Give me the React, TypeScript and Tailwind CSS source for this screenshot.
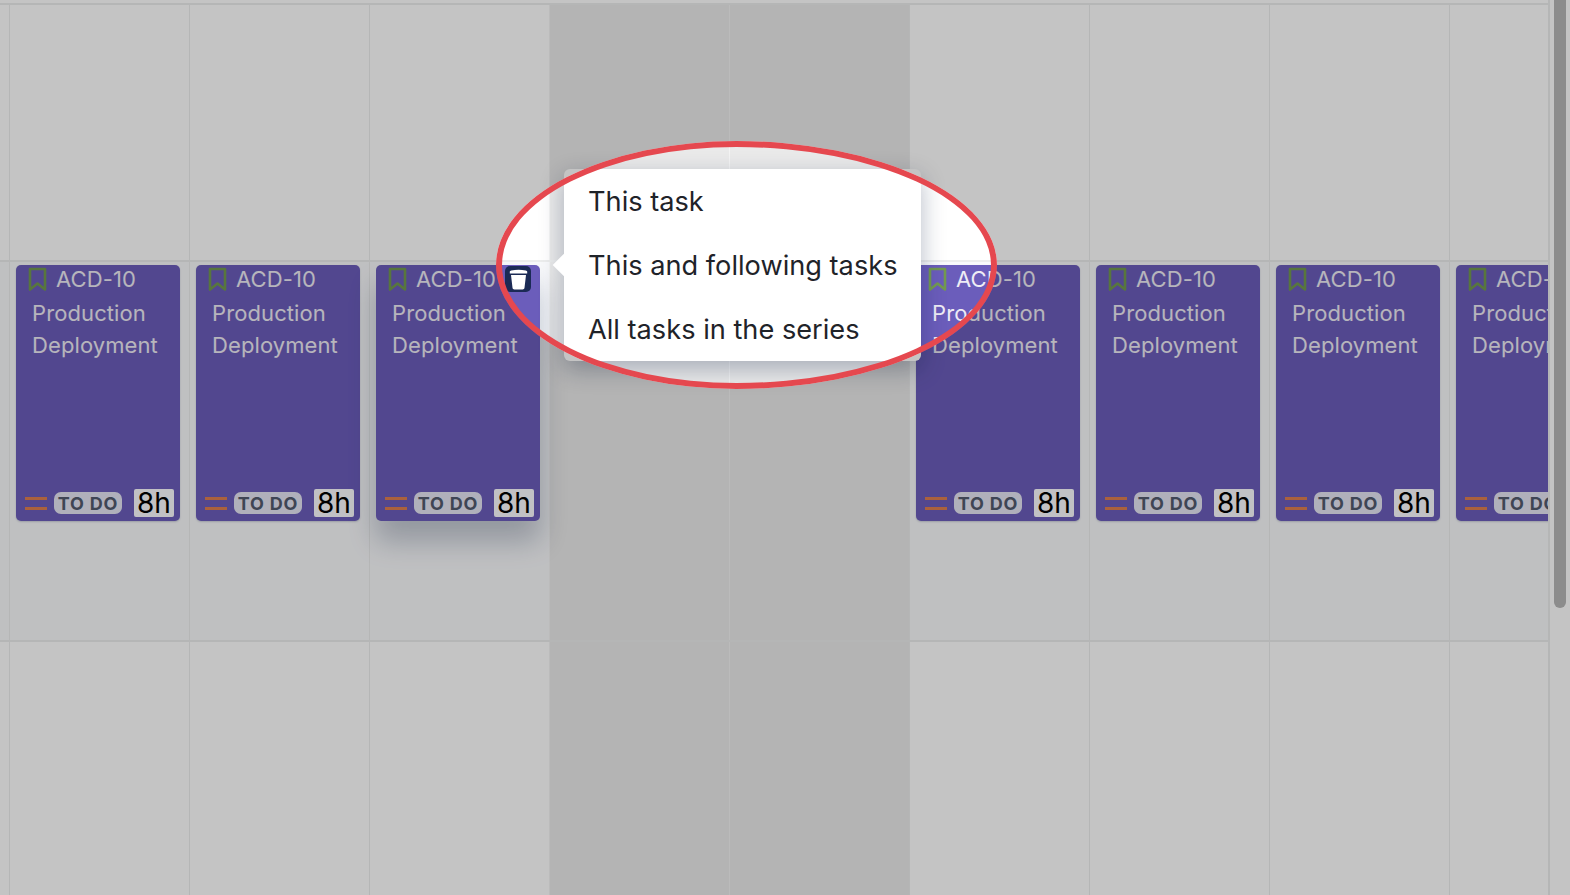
import * as React from 'react';

const days = [false, false, false, true, true, false, false, false, false];
const cardDays = [0, 1, 2, 5, 6, 7, 8];

const BookmarkIcon = () => (
  <svg width="19" height="25" viewBox="0 0 19 25" fill="none" className="shrink-0">
    <path d="M2 2h15v20.5l-7.5-6-7.5 6z" stroke="#739a50" strokeWidth="2.6" strokeLinejoin="round" />
  </svg>
);

const TrashIcon = () => (
  <svg width="19" height="21" viewBox="0 0 19 21" fill="#fff">
    <path d="M.8 2.8C.8 2 1.5 1.5 2.3 1.4 6.8.6 12.2.6 16.7 1.4 17.5 1.5 18.2 2 18.2 2.8V4.4H.8z" />
    <path d="M2 6h15l-1.5 12.8c-.1 1-.9 1.7-1.9 1.7H5.4c-1 0-1.8-.7-1.9-1.7z" />
  </svg>
);

const Card = ({ hovered }: { hovered?: boolean }) => (
  <div
    className={`relative flex h-[256px] w-[164px] flex-col justify-between rounded-[5px] bg-[#6b5dbb] text-[#eeecf5] ${
      hovered ? 'shadow-[0_20px_28px_rgba(9,30,66,0.24)]' : 'shadow-[0_1px_2px_rgba(9,30,66,0.2)]'
    }`}
  >
    <div>
      <div className="flex h-[28px] items-center gap-[9px] pl-[12px]">
        <BookmarkIcon />
        <span className="text-[22px] leading-[32px] tracking-[0.1px]">ACD-10</span>
      </div>
      <div className="mt-[4px] pl-[16px] pr-[8px] text-[22px] leading-[32px] tracking-[0.1px]">Production Deployment</div>
    </div>
    <div className="flex items-center pb-[4px] pl-[9px]">
      <div className="flex h-[13px] w-[22px] flex-col justify-between">
        <div className="h-[3px] bg-[#dd7f50]" />
        <div className="h-[3px] bg-[#dd7f50]" />
      </div>
      <div className="ml-[7px] flex h-[22px] w-[68px] items-center justify-center rounded-[7px] bg-[#e5e5f4] text-[18px] font-bold tracking-[0.8px] whitespace-nowrap text-[#525a6e]">
        TO DO
      </div>
      <div className="ml-[12px] flex h-[28px] w-[40px] items-center justify-center rounded-[2px] bg-[#fcfcff] text-[28px] leading-none text-black">
        8h
      </div>
    </div>
    {hovered && (
      <div className="absolute top-[1px] right-[9px] flex h-[26px] w-[26px] items-center justify-center rounded-[5px] bg-[#1b2a55]">
        <TrashIcon />
      </div>
    )}
  </div>
);

const Row = ({ className, withCards }: { className: string; withCards?: boolean }) => (
  <div className={`flex overflow-hidden ${className}`}>
    <div className="w-[9px] shrink-0" />
    {days.map((weekend, i) => (
      <div
        key={i}
        className={`w-[180px] shrink-0 border-l pt-[3px] pl-[6px] ${
          weekend ? 'border-[#f4f4f4] bg-[#eaeaea]' : 'border-[#eceded]'
        }`}
      >
        {withCards && cardDays.includes(i) && <Card hovered={i === 2} />}
      </div>
    ))}
  </div>
);

export default function App() {
  return (
    <div className="relative flex h-screen w-full overflow-hidden bg-white font-['Inter',sans-serif]">
      <div className="flex min-w-0 flex-1 flex-col border-r-2 border-[#eceded]">
        <div className="h-[5px] shrink-0 border-b-2 border-[#eceded]" />
        <Row className="h-[255px] shrink-0" />
        <Row withCards className="h-[382px] shrink-0 border-t-2 border-b-2 border-[#eceded] bg-[#f9fafc]" />
        <Row className="flex-1" />
      </div>
      <div className="w-[20px] shrink-0 px-[4px]">
        <div className="-mt-[10px] h-[618px] w-[12px] rounded-full bg-[#b6b6b6]" />
      </div>

      <div className="absolute top-[169px] left-[564px] w-[357px] rounded-[6px] bg-white text-[27.2px] text-[#1f2329] shadow-[0_8px_24px_rgba(9,30,66,0.3)]">
        <div className="absolute top-[88px] -left-[8px] h-[16px] w-[16px] rotate-45 bg-white" />
        {['This task', 'This and following tasks', 'All tasks in the series'].map(label => (
          <div key={label} className="relative flex h-[64px] items-center px-[24px] pt-[2px] whitespace-nowrap">
            {label}
          </div>
        ))}
      </div>

      <div className="absolute top-[141px] left-[496px] h-[248px] w-[501px] rounded-[48%_52%_52%_48%/50%] border-[6px] border-[#e5484f] shadow-[0_0_0_2000px_rgba(0,0,0,0.23)]" />
    </div>
  );
}
